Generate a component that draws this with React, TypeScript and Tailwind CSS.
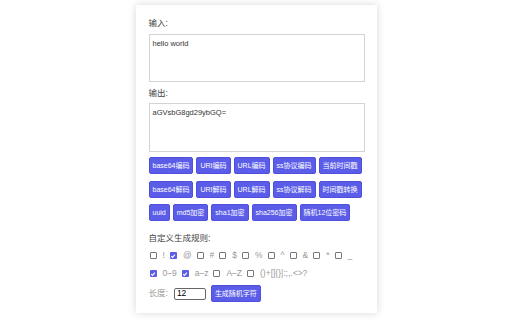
const row1 = ["base64编码", "URI编码", "URL编码", "ss协议编码", "当前时间戳"];
const row2 = ["base64解码", "URI解码", "URL解码", "ss协议解码", "时间戳转换"];
const row3 = ["uuid", "md5加密", "sha1加密", "sha256加密", "随机12位密码"];

const symbols = [
  { label: "!", checked: false },
  { label: "@", checked: true },
  { label: "#", checked: false },
  { label: "$", checked: false },
  { label: "%", checked: false },
  { label: "^", checked: false },
  { label: "&", checked: false },
  { label: "*", checked: false },
  { label: "_", checked: false },
];

const ranges = [
  { label: "0–9", checked: true },
  { label: "a–z", checked: true },
  { label: "A–Z", checked: false },
  { label: "()+[]{}|:;,.<>?", checked: false },
];

const Btn = ({ text, className = "" }: { text: string; className?: string }) => (
  <button
    className={
      "h-[17px] px-[3px] rounded-[2px] bg-[#5b5de8] border border-[#4f51dc] text-white text-[7px] leading-none whitespace-nowrap " +
      className
    }
  >
    {text}
  </button>
);

const Check = ({ checked }: { checked: boolean }) =>
  checked ? (
    <span className="w-[7px] h-[7px] rounded-[1px] bg-[#5b5de8] flex items-center justify-center shrink-0">
      <svg width="6" height="6" viewBox="0 0 10 10">
        <path d="M2 5.2 L4.2 7.4 L8.2 2.6" fill="none" stroke="white" strokeWidth="1.8" />
      </svg>
    </span>
  ) : (
    <span className="w-[7px] h-[7px] rounded-[1px] border border-[#777] bg-white shrink-0" />
  );

const Opt = ({ label, checked }: { label: string; checked: boolean }) => (
  <div className="flex items-center">
    <Check checked={checked} />
    <span className="ml-[6px] mr-[5px] text-[8.5px] text-[#999] leading-[11px] whitespace-nowrap">{label}</span>
  </div>
);

export default function App() {
  return (
    <div className="min-h-[320px] bg-white font-['Liberation_Sans','Noto_Sans_CJK_SC',sans-serif]">
      <div className="w-[241px] mx-auto pt-[5px]">
        <div className="bg-white shadow-[0_0_8px_rgba(0,0,0,0.16)] pt-[13px] pb-[11px] pl-[13px] pr-[12px]">
          <div className="text-[8.5px] leading-[11px] text-[#444]">输入:</div>
          <textarea
            className="mt-[5px] block w-[216px] h-[48px] border border-[#d4d4d4] px-[3px] py-[4px] text-[7.5px] leading-[9px] text-[#333] resize-none outline-none overflow-hidden"
            defaultValue="hello world"
          />
          <div className="mt-[6px] text-[8.5px] leading-[11px] text-[#444]">输出:</div>
          <textarea
            className="mt-[4px] block w-[216px] h-[49px] border border-[#d4d4d4] px-[3px] py-[4px] text-[7.5px] leading-[9px] text-[#333] resize-none outline-none overflow-hidden"
            defaultValue="aGVsbG8gd29ybGQ="
          />
          <div className="mt-[5px] flex gap-[3px]">
            {row1.map((t) => (
              <Btn key={t} text={t} />
            ))}
          </div>
          <div className="mt-[7px] flex gap-[3px]">
            {row2.map((t) => (
              <Btn key={t} text={t} />
            ))}
          </div>
          <div className="mt-[6px] flex gap-[3px]">
            {row3.map((t) => (
              <Btn key={t} text={t} />
            ))}
          </div>
          <div className="mt-[12px] text-[8.5px] leading-[11px] text-[#444]">自定义生成规则:</div>
          <div className="mt-[6px] flex items-center pl-[1px]">
            {symbols.map((s) => (
              <Opt key={s.label} label={s.label} checked={s.checked} />
            ))}
          </div>
          <div className="mt-[7px] flex items-center pl-[1px]">
            {ranges.map((s) => (
              <Opt key={s.label} label={s.label} checked={s.checked} />
            ))}
          </div>
          <div className="mt-[6px] flex items-center">
            <span className="text-[8.5px] leading-[11px] text-[#999]">长度:</span>
            <input
              className="ml-[6px] w-[32px] h-[12px] border border-[#666] rounded-[2px] px-[2px] text-[8.5px] text-black outline-none"
              defaultValue="12"
            />
            <Btn text="生成随机字符" className="ml-[5px]" />
          </div>
        </div>
      </div>
    </div>
  );
}
